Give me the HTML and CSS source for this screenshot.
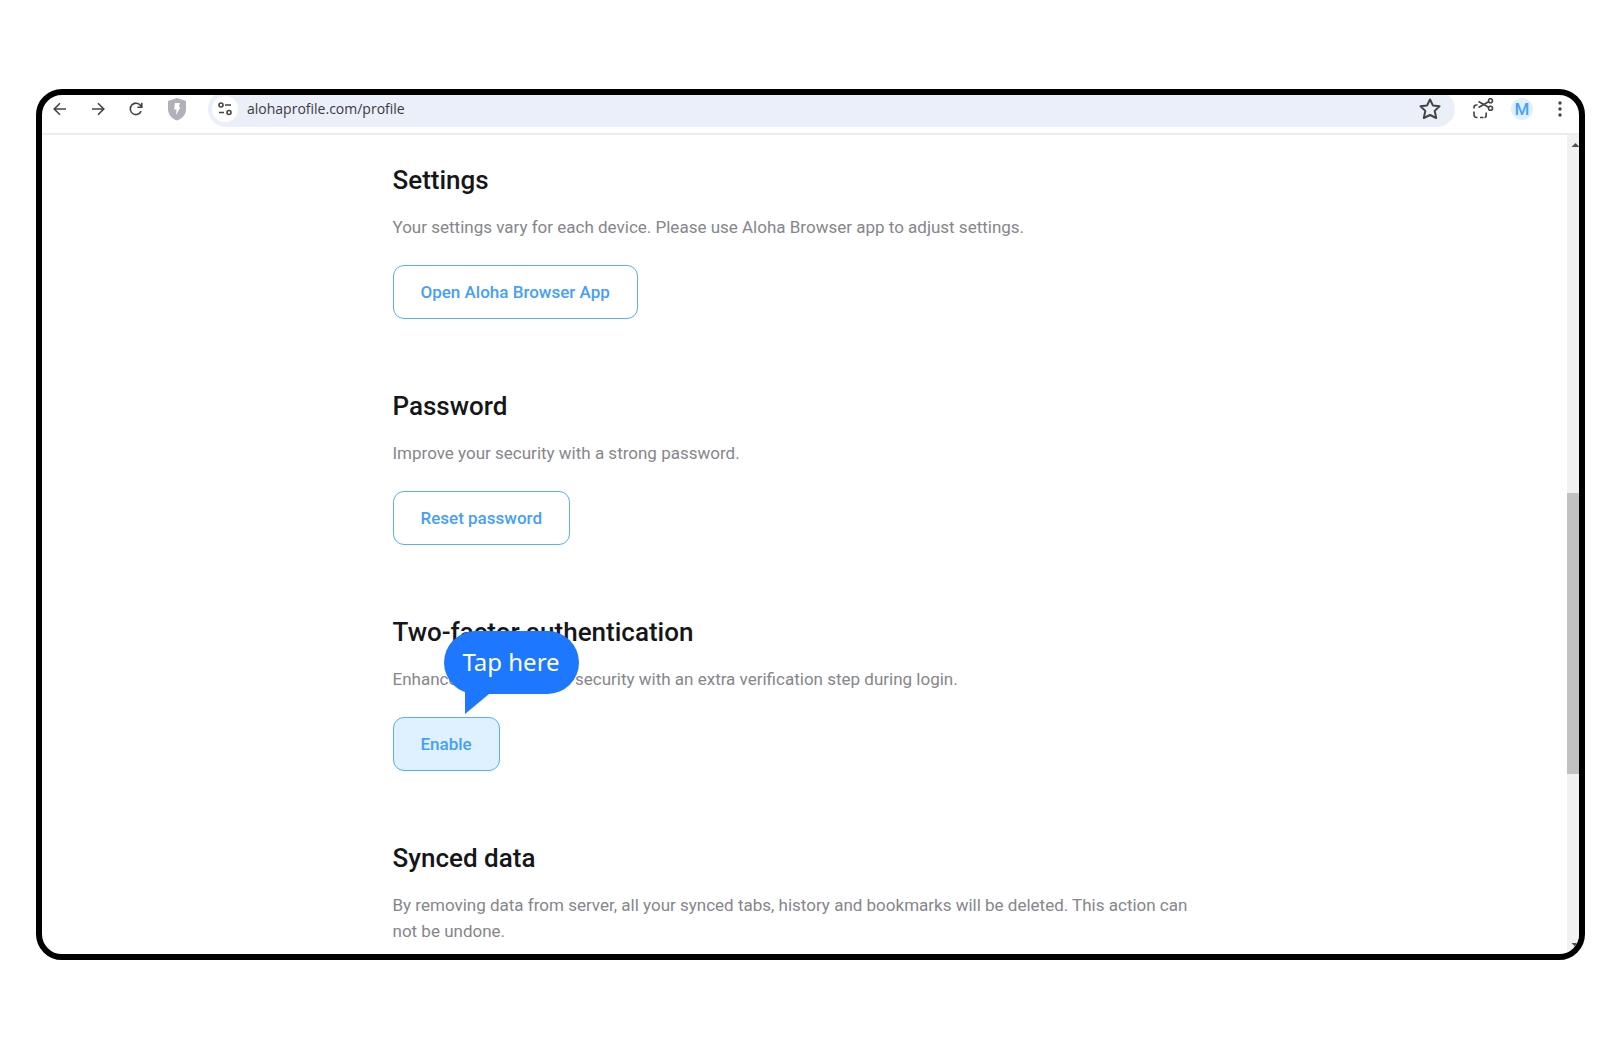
FILE: index.html
```html
<!DOCTYPE html>
<html lang="en">
<head>
    <meta charset="UTF-8">
    <meta name="viewport" content="width=device-width, initial-scale=1.0">
    <title>Aloha Profile</title>
    <link rel="stylesheet" href="styles.css">
</head>
<body>
    <div class="window">
        <header class="toolbar">
            <button class="icon-btn" aria-label="Back">
                <svg width="16" height="16" viewBox="0 0 16 16"><path d="M14 8H2.500M8 2.200L2.200 8L8 13.800"/></svg>
            </button>
            <button class="icon-btn" aria-label="Forward">
                <svg width="16" height="16" viewBox="0 0 16 16"><path d="M2 8H13.500M8 2.200L13.800 8L8 13.800"/></svg>
            </button>
            <button class="icon-btn reload" aria-label="Reload">
                <svg width="16" height="16" viewBox="0 0 16 16"><path d="M13.200 10.200A5.700 5.700 0 1 1 12.600 4.500L13.700 6M13.800 1.800V6.200H9.400"/></svg>
            </button>
            <button class="icon-btn shield" aria-label="Shield">
                <svg width="18" height="23" viewBox="0 0 18 23"><path class="shield-body" d="M9 0L18 3V11C18 16.500 14.500 20.500 9 22.500C3.500 20.500 0 16.500 0 11V3Z"/><path class="shield-bolt" d="M7 5H12L10.800 9H12.500L8 17L8.500 11.500H6Z"/></svg>
            </button>

            <div class="address">
                <button class="site-info" aria-label="Site information">
                    <svg width="16" height="16" viewBox="0 0 16 16"><circle cx="4" cy="4" r="2"/><path d="M8 4H14M2 11.500H7"/><circle cx="12" cy="11.500" r="2"/></svg>
                </button>
                <input class="url" type="text" value="alohaprofile.com/profile" aria-label="Address">
                <button class="icon-btn star" aria-label="Bookmark">
                    <svg width="22" height="22" viewBox="0 0 22 22"><path d="M11 1.500L13.900 7.400L20.500 8.300L15.700 12.900L17.200 20L11 17L4.800 20L6.300 12.900L1.500 8.300L8.100 7.400Z"/></svg>
                </button>
            </div>

            <button class="icon-btn snip" aria-label="Screenshot">
                <svg width="22" height="22" viewBox="0 0 22 22">
                    <path d="M5.500 7H4.500Q2 7 2 9.500V10.500M2 13.500V16.500Q2 19.500 4.500 19.500H5.500M8 19.500H11.500M14.200 14.500V17Q14.200 19.500 12.500 19.500"/>
                    <path d="M6.500 3.500L17 9.500M6.500 9.500L17 3.500"/>
                    <circle cx="18.500" cy="2.700" r="2"/><circle cx="18.500" cy="10.300" r="2"/>
                </svg>
            </button>
            <button class="avatar" aria-label="Profile">M</button>
            <button class="icon-btn menu" aria-label="Menu">
                <svg width="6" height="18" viewBox="0 0 6 18"><circle cx="3" cy="3" r="1.700"/><circle cx="3" cy="9" r="1.700"/><circle cx="3" cy="15" r="1.700"/></svg>
            </button>
        </header>

        <div class="viewport">
            <main class="page">
                <div class="container">
                    <section>
                        <h2>Settings</h2>
                        <p>Your settings vary for each device. Please use Aloha Browser app to adjust settings.</p>
                        <button class="btn">Open Aloha Browser App</button>
                    </section>

                    <section>
                        <h2>Password</h2>
                        <p>Improve your security with a strong password.</p>
                        <button class="btn">Reset password</button>
                    </section>

                    <section>
                        <h2>Two-factor authentication</h2>
                        <p>Enhance your account's security with an extra verification step during login.</p>
                        <button class="btn active">Enable</button>
                        <div class="tip">
                            Tap here
                            <svg class="tip-tail" width="24" height="24" viewBox="0 0 24 24"><path d="M0 0V24L24 4V0Z"/></svg>
                        </div>
                    </section>

                    <section>
                        <h2>Synced data</h2>
                        <p>By removing data from server, all your synced tabs, history and bookmarks will be deleted. This action can not be undone.</p>
                    </section>
                </div>
            </main>

            <div class="scrollbar">
                <svg width="17" height="17" viewBox="0 0 17 17"><path d="M4.500 12L8.500 8L12.500 12Z"/></svg>
                <div class="track">
                    <div class="thumb"></div>
                </div>
                <svg width="17" height="17" viewBox="0 0 17 17"><path d="M4.500 6L8.500 10L12.500 6Z"/></svg>
            </div>
        </div>
    </div>
</body>
</html>
```

FILE: styles.css
```css
* {
    box-sizing: border-box;
}

body {
    margin: 0;
    padding: 89px 36px 88px;
    height: 100vh;
    background-color: #fff;
    font-family: Roboto, sans-serif;
}

button {
    font-family: inherit;
    cursor: pointer;
}

.window {
    height: 100%;
    display: flex;
    flex-direction: column;
    border: 6px solid #000;
    border-radius: 26px;
    overflow: hidden;
}

/* Browser toolbar, its top edge runs under the frame */
.toolbar {
    flex: none;
    display: flex;
    align-items: center;
    height: 50px;
    margin-top: -10px;
    padding: 0 16px 0 10px;
    border-bottom: 2px solid #ececee;
}

.icon-btn {
    display: flex;
    padding: 0;
    margin-right: 22px;
    border: none;
    background: none;
}

.icon-btn svg,
.site-info svg {
    fill: none;
    stroke: #444;
    stroke-width: 1.6;
}

.reload {
    margin-right: 24px;
}

.icon-btn .shield-body {
    fill: #b1b1ba;
    stroke: none;
}

.icon-btn .shield-bolt {
    fill: #fff;
    stroke: none;
}

.address {
    flex: 1;
    display: flex;
    align-items: center;
    height: 36px;
    padding: 0 14px 0 4px;
    border-radius: 18px;
    background-color: #ebeff9;
}

.site-info {
    display: flex;
    align-items: center;
    justify-content: center;
    width: 26px;
    height: 26px;
    padding: 0;
    border: none;
    border-radius: 50%;
    background-color: #fff;
}

.url {
    flex: 1;
    margin-left: 9px;
    padding: 0 0 2px;
    border: none;
    outline: none;
    background: none;
    color: #3a3a3e;
    font-family: "Open Sans", sans-serif;
    font-size: 14px;
}

.star {
    margin-right: 0;
}

.icon-btn.star svg {
    stroke-width: 2;
    stroke-linejoin: round;
}

.snip {
    margin: 0 17px;
}

.avatar {
    width: 22px;
    height: 22px;
    padding: 0;
    border: none;
    border-radius: 50%;
    background-color: #dff0ff;
    color: #46a0fc;
    font-size: 17px;
    font-weight: 500;
    line-height: 22px;
}

.menu {
    margin: 0 0 0 24px;
}

.icon-btn.menu svg {
    fill: #444;
    stroke: none;
}

.viewport {
    flex: 1;
    display: flex;
    min-height: 0;
}

.page {
    flex: 1;
    overflow: hidden;
}

.container {
    max-width: 824px;
    margin: 0 auto;
    padding: 29px 14px 0 0;
}

section {
    position: relative;
    margin-bottom: 71px;
}

h2 {
    margin: 0 0 18px;
    color: #16161a;
    font-size: 26px;
    font-weight: 500;
    line-height: 32px;
}

p {
    margin: 0 0 25px;
    color: #86868b;
    font-size: 17px;
    line-height: 26px;
}

.btn {
    display: block;
    height: 54px;
    padding: 0 27px;
    border: 1px solid #58aeff;
    border-radius: 11px;
    background-color: #fff;
    color: #449ffb;
    font-size: 17px;
    font-weight: 500;
}

.btn.active {
    background-color: #dff0ff;
}

/* Callout bubble pointing at the button */
.tip {
    position: absolute;
    top: 15px;
    left: 51px;
    width: 135px;
    height: 63px;
    border-radius: 32px;
    background-color: #1e78ff;
    color: #fff;
    font-family: "Noto Sans", sans-serif;
    font-size: 24px;
    line-height: 62px;
    text-align: center;
}

.tip-tail {
    position: absolute;
    top: 59px;
    left: 21px;
    fill: #1e78ff;
}

.scrollbar {
    flex: none;
    display: flex;
    flex-direction: column;
    width: 17px;
    margin-right: -5px;
    background-color: #f1f1f1;
}

.scrollbar svg {
    fill: #505050;
}

.track {
    flex: 1;
}

.thumb {
    position: relative;
    top: 43.5%;
    height: 35.7%;
    background-color: #c1c1c1;
}
```
